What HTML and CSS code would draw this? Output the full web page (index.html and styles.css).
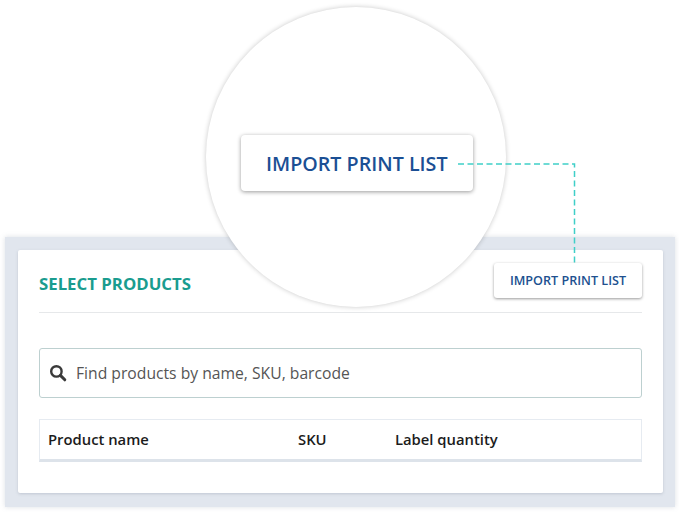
FILE: index.html
```html
<!DOCTYPE html>
<html lang="en">
<head>
  <meta charset="UTF-8" />
  <meta name="viewport" content="width=device-width, initial-scale=1.0" />
  <title>Select products</title>
  <link rel="stylesheet" href="styles.css">
</head>
<body>
  <div class="frame">
    <div class="panel">
      <div class="panel-head">
        <h2 class="panel-title">SELECT PRODUCTS</h2>
        <button class="import-btn">IMPORT PRINT LIST</button>
      </div>
      <div class="search">
        <svg class="search-icon" width="18" height="18" viewBox="0 0 18 18" fill="none" stroke="#3a3a3a">
          <circle cx="7.4" cy="7.4" r="5.2" stroke-width="2.4" />
          <path d="M11.4 11.4L15.8 15.8" stroke-width="3" stroke-linecap="round" />
        </svg>
        <span>Find products by name, SKU, barcode</span>
      </div>
      <div class="table-head">
        <span class="col-name">Product name</span>
        <span class="col-sku">SKU</span>
        <span>Label quantity</span>
      </div>
    </div>
  </div>

  <!-- Лупа над кнопкой -->
  <div class="lens">
    <div class="lens-btn">IMPORT PRINT LIST</div>
  </div>

  <svg class="connector" width="679" height="512" fill="none" stroke="#3fcfc8" stroke-width="1.5" stroke-dasharray="6 3.5">
    <path d="M458 164H574.5V263" />
  </svg>
</body>
</html>
```

FILE: styles.css
```css
* {
  box-sizing: border-box;
}

body {
  margin: 0;
  height: 512px;
  overflow: hidden;
  position: relative;
  background: #fff;
  font-family: "Open Sans", sans-serif;
  padding: 237px 4px 0 5px;
}

.frame {
  height: 270px;
  padding: 13px 12px 14px 13px;
  background: #e1e6ee;
  box-shadow: 0 0 5px rgba(120, 130, 150, 0.25);
}

.panel {
  height: 100%;
  padding: 13px 21px 0;
  background: #fff;
  border-radius: 2px;
  box-shadow: 0 1px 3px rgba(120, 130, 150, 0.3);
}

.panel-head {
  height: 50px;
  display: flex;
  justify-content: space-between;
  align-items: flex-start;
  border-bottom: 1px solid #e6e8ea;
}

.panel-title {
  margin: 10px 0 0;
  font-size: 16.8px;
  line-height: 22px;
  font-weight: 700;
  color: #1a9c8f;
}

.import-btn {
  position: relative;
  z-index: 3;
  width: 148px;
  height: 35px;
  padding: 0;
  background: #fff;
  border: none;
  border-radius: 3px;
  box-shadow: 0 1px 3px rgba(0, 0, 0, 0.4);
  font-family: inherit;
  font-size: 12.6px;
  font-weight: 600;
  color: #20508f;
}

.search {
  height: 50px;
  margin-top: 35px;
  padding-left: 9px;
  display: flex;
  align-items: center;
  gap: 8px;
  border: 1px solid #bdd0d0;
  border-radius: 3px;
  font-size: 15.7px;
  color: #555;
}

.search span {
  margin-left: 1px;
}

.table-head {
  height: 43px;
  margin-top: 21px;
  padding: 0 0 2px 8px;
  display: flex;
  align-items: center;
  border: 1px solid #e6ebf1;
  border-bottom: 3px solid #dde3ea;
  font-size: 14.8px;
  font-weight: 600;
  color: #1c1c1c;
}

.col-name {
  width: 250px;
}

.col-sku {
  width: 97px;
}

.lens {
  position: absolute;
  left: 206px;
  top: 7px;
  width: 300px;
  height: 300px;
  padding-left: 35px;
  display: flex;
  align-items: center;
  background: #fff;
  border-radius: 50%;
  box-shadow: 0 0 5px rgba(0, 0, 0, 0.22);
}

.lens-btn {
  width: 232px;
  height: 56px;
  padding-left: 25px;
  margin-top: 12px;
  display: flex;
  align-items: center;
  background: #fff;
  border-radius: 4px;
  box-shadow: 0 1px 4px rgba(0, 0, 0, 0.4);
  font-size: 19.7px;
  font-weight: 600;
  color: #1b4f94;
}

.connector {
  position: absolute;
  left: 0;
  top: 0;
  pointer-events: none;
}
```
